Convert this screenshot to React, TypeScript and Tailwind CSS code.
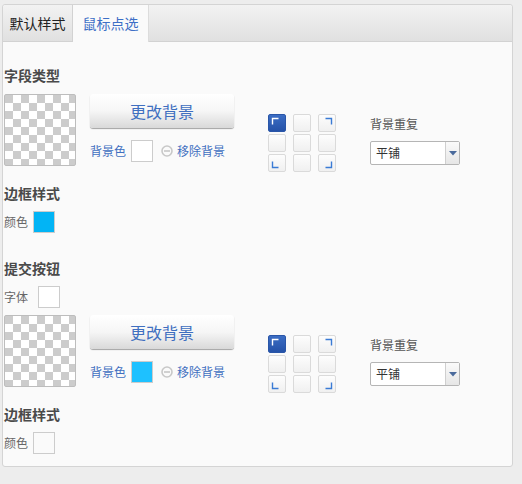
import React from 'react';

const font = { fontFamily: '"Noto Sans CJK SC", "Noto Sans", sans-serif' };

type Corner = 'tl' | 'tr' | 'bl' | 'br' | null;

const cornerPoints: Record<string, string> = {
  tl: '4.5,10.5 4.5,4.5 10.5,4.5',
  tr: '7.5,4.5 13.5,4.5 13.5,10.5',
  bl: '4.5,7.5 4.5,13.5 10.5,13.5',
  br: '13.5,7.5 13.5,13.5 7.5,13.5',
};

const cells: { corner: Corner; active?: boolean }[] = [
  { corner: 'tl', active: true },
  { corner: null },
  { corner: 'tr' },
  { corner: null },
  { corner: null },
  { corner: null },
  { corner: 'bl' },
  { corner: null },
  { corner: 'br' },
];

const Checker: React.FC = () => (
  <div className="w-[72px] h-[72px] shrink-0 rounded-[2px] border border-[#bdbdbd] bg-[conic-gradient(#fff_25%,#cccccc_0_50%,#fff_0_75%,#cccccc_0)] bg-[length:16px_16px]" />
);

const Swatch: React.FC<{ color?: string; className?: string }> = ({ color, className }) => (
  <div
    className={`w-[22px] h-[22px] border border-[#cccccc] ${className ?? ''}`}
    style={{ backgroundColor: color ?? '#ffffff' }}
  />
);

const PositionGrid: React.FC = () => (
  <div className="grid grid-cols-[18px_18px_18px] gap-x-[7px] gap-y-[2px] mt-[20px] ml-[34px] shrink-0">
    {cells.map((cell, i) => (
      <div
        key={i}
        className={`w-[18px] h-[18px] rounded-[2px] border ${
          cell.active
            ? 'border-[#2a56a8] bg-gradient-to-b from-[#3b6dc4] to-[#2552a8]'
            : 'border-[#dadada] bg-gradient-to-b from-[#fdfdfd] to-[#f0f0f0]'
        }`}
      >
        {cell.corner && (
          <svg width="16" height="16" viewBox="1 1 16 16" className="block">
            <polyline
              points={cornerPoints[cell.corner]}
              fill="none"
              stroke={cell.active ? '#ffffff' : '#3a7bd5'}
              strokeWidth="1.4"
            />
          </svg>
        )}
      </div>
    ))}
  </div>
);

const RepeatSelect: React.FC = () => (
  <div className="mt-[9px] flex w-[90px] h-[24px] border border-[#b5b5b5] rounded-[2px] bg-white">
    <div className="flex-1 flex items-center pl-[5px] text-[12px] text-[#333]">平铺</div>
    <div className="w-[14px] flex items-center justify-center border-l border-[#cfcfcf] bg-gradient-to-b from-[#fafafa] to-[#e6e6e6]">
      <svg width="8" height="5" viewBox="0 0 8 5">
        <polygon points="0,0 8,0 4,4.5" fill="#4a6a9c" />
      </svg>
    </div>
  </div>
);

const MinusIcon: React.FC = () => (
  <svg width="12" height="12" viewBox="0 0 12 12" className="ml-[8px]">
    <circle cx="6" cy="6" r="5" fill="none" stroke="#c8c8c8" strokeWidth="1.6" />
    <rect x="3" y="5.2" width="6" height="1.6" fill="#c8c8c8" />
  </svg>
);

const BackgroundRow: React.FC<{ swatch?: string; className?: string }> = ({ swatch, className }) => (
  <div className={`flex items-start h-[72px] ${className ?? ''}`}>
    <Checker />
    <div className="ml-[14px] w-[144px] shrink-0">
      <button className="w-[144px] h-[34px] rounded-[3px] bg-gradient-to-b from-white via-[#f6f6f6] to-[#d9d9d9] shadow-[0_1px_1px_rgba(0,0,0,0.35)] text-[16px] text-[#3f6fc0] leading-[34px]">
        更改背景
      </button>
      <div className="mt-[12px] flex items-center h-[22px] text-[12px] text-[#3f6fc0] whitespace-nowrap">
        <span>背景色</span>
        <Swatch color={swatch} className="ml-[5px]" />
        <MinusIcon />
        <span className="ml-[4px]">移除背景</span>
      </div>
    </div>
    <PositionGrid />
    <div className="ml-[34px] mt-[22px]">
      <div className="text-[12px] leading-[16px] text-[#555]">背景重复</div>
      <RepeatSelect />
    </div>
  </div>
);

const Heading: React.FC<{ children: React.ReactNode; className?: string }> = ({ children, className }) => (
  <div className={`text-[14px] leading-[18px] font-bold text-[#4a4a4a] ${className ?? ''}`}>{children}</div>
);

const App: React.FC = () => {
  return (
    <div className="min-h-[484px] bg-[#ededed] pt-[4px] pl-[2px]" style={font}>
      <div className="w-[511px] border border-[#d4d4d4] rounded-[3px] bg-[#fafafa]">
        {/* Tabs */}
        <div className="flex h-[37px] bg-gradient-to-b from-[#f2f2f2] to-[#e0e0e0] rounded-t-[3px]">
          <div className="w-[70px] flex items-center justify-center border-r border-b border-[#d2d2d2] text-[14px] text-[#222]">
            默认样式
          </div>
          <div className="w-[76px] flex items-center justify-center bg-[#fafafa] border-r border-[#dcdcdc] text-[14px] text-[#3d6fc6]">
            鼠标点选
          </div>
          <div className="flex-1 border-b border-[#d2d2d2]" />
        </div>

        {/* Content */}
        <div className="pl-[1px] pt-[24px] pb-[12px]">
          <Heading>字段类型</Heading>
          <BackgroundRow className="mt-[10px]" />

          <Heading className="mt-[18px]">边框样式</Heading>
          <div className="mt-[9px] flex items-center h-[22px] text-[12px] text-[#666]">
            <span>颜色</span>
            <Swatch color="#02b4f5" className="ml-[5px]" />
          </div>

          <Heading className="mt-[26px]">提交按钮</Heading>
          <div className="mt-[9px] flex items-center h-[22px] text-[12px] text-[#666]">
            <span>字体</span>
            <Swatch className="ml-[10px]" />
          </div>
          <BackgroundRow swatch="#1ec1ff" className="mt-[7px]" />

          <Heading className="mt-[18px]">边框样式</Heading>
          <div className="mt-[9px] flex items-center h-[22px] text-[12px] text-[#666]">
            <span>颜色</span>
            <Swatch color="#fafafa" className="ml-[5px]" />
          </div>
        </div>
      </div>
    </div>
  );
};

export default App;
